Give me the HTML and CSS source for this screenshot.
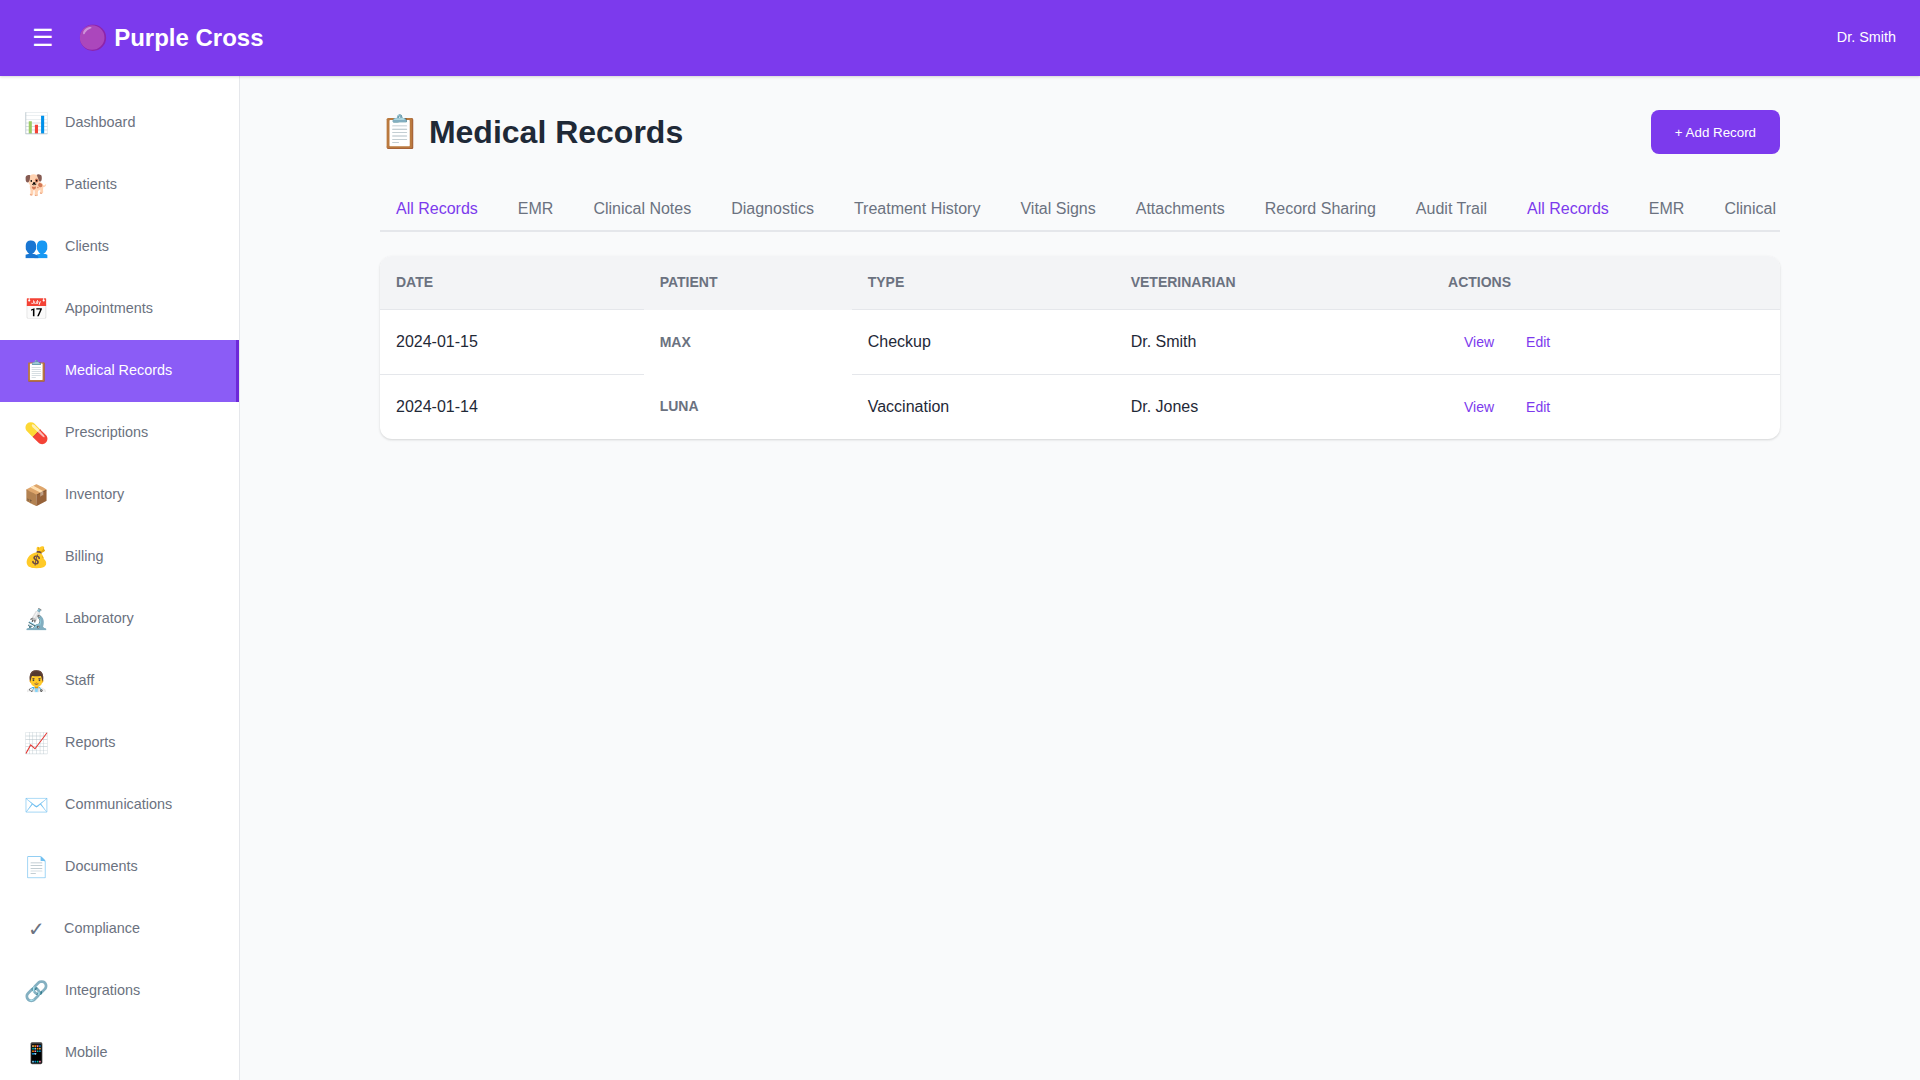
FILE: index.html
```html
<!DOCTYPE html>
<html lang="en">
<head>
<meta charset="UTF-8">
<title>Purple Cross</title>
<link rel="stylesheet" href="styles.css">
</head>
<body>
<header class="navbar">
  <div class="navbar-brand">
    <button class="menu-toggle">☰</button>
    <h1>🟣 Purple Cross</h1>
  </div>
  <span class="user-name">Dr. Smith</span>
</header>
<div class="layout">
  <aside class="sidebar">
    <nav>
      <a class="nav-item"><span class="nav-icon">📊</span><span>Dashboard</span></a>
      <a class="nav-item"><span class="nav-icon">🐕</span><span>Patients</span></a>
      <a class="nav-item"><span class="nav-icon">👥</span><span>Clients</span></a>
      <a class="nav-item"><span class="nav-icon">📅</span><span>Appointments</span></a>
      <a class="nav-item active"><span class="nav-icon">📋</span><span>Medical Records</span></a>
      <a class="nav-item"><span class="nav-icon">💊</span><span>Prescriptions</span></a>
      <a class="nav-item"><span class="nav-icon">📦</span><span>Inventory</span></a>
      <a class="nav-item"><span class="nav-icon">💰</span><span>Billing</span></a>
      <a class="nav-item"><span class="nav-icon">🔬</span><span>Laboratory</span></a>
      <a class="nav-item"><span class="nav-icon">👨‍⚕️</span><span>Staff</span></a>
      <a class="nav-item"><span class="nav-icon">📈</span><span>Reports</span></a>
      <a class="nav-item"><span class="nav-icon">✉️</span><span>Communications</span></a>
      <a class="nav-item"><span class="nav-icon">📄</span><span>Documents</span></a>
      <a class="nav-item"><span class="nav-icon">✓</span><span>Compliance</span></a>
      <a class="nav-item"><span class="nav-icon">🔗</span><span>Integrations</span></a>
      <a class="nav-item"><span class="nav-icon">📱</span><span>Mobile</span></a>
    </nav>
  </aside>
  <main class="content">
    <div class="page">
      <div class="page-header">
        <h1>📋 Medical Records</h1>
        <button class="btn-primary">+ Add Record</button>
      </div>
      <div class="tabs">
        <a class="tab active">All Records</a>
        <a class="tab">EMR</a>
        <a class="tab">Clinical Notes</a>
        <a class="tab">Diagnostics</a>
        <a class="tab">Treatment History</a>
        <a class="tab">Vital Signs</a>
        <a class="tab">Attachments</a>
        <a class="tab">Record Sharing</a>
        <a class="tab">Audit Trail</a>
        <a class="tab active">All Records</a>
        <a class="tab">EMR</a>
        <a class="tab">Clinical Notes</a>
      </div>
      <div class="table-container">
        <table class="data-table">
          <thead>
            <tr><th>Date</th><th>Patient</th><th>Type</th><th>Veterinarian</th><th>Actions</th></tr>
          </thead>
          <tbody>
            <tr><td>2024-01-15</td><th>Max</th><td>Checkup</td><td>Dr. Smith</td><td><button class="btn-link">View</button><button class="btn-link">Edit</button></td></tr>
            <tr><td>2024-01-14</td><th>Luna</th><td>Vaccination</td><td>Dr. Jones</td><td><button class="btn-link">View</button><button class="btn-link">Edit</button></td></tr>
          </tbody>
        </table>
      </div>
    </div>
  </main>
</div>
</body>
</html>
```

FILE: styles.css
```css
* { box-sizing: border-box; margin: 0; padding: 0; }
body {
  height: 100vh;
  overflow: hidden;
  display: flex;
  flex-direction: column;
  font-family: "Liberation Sans", Arial, sans-serif;
  line-height: 1.5;
  color: #1f2937;
  background: #f9fafb;
}
button { font-family: inherit; border: none; cursor: pointer; }
.navbar {
  position: relative;
  z-index: 1;
  flex: none;
  height: 76px;
  padding: 0 24px;
  display: flex;
  align-items: center;
  justify-content: space-between;
  background: #7c3aed;
  color: #fff;
  box-shadow: 0 1px 3px rgba(0, 0, 0, 0.1), 0 1px 2px rgba(0, 0, 0, 0.06);
}
.navbar-brand { display: flex; align-items: center; gap: 16px; }
.navbar-brand h1 { font-size: 24px; }
.menu-toggle { width: 37.5px; background: none; color: #fff; font-size: 24px; padding: 8px; }
.user-name { font-size: 14.4px; }
.layout { flex: 1; min-height: 0; display: flex; }
.sidebar {
  flex: none;
  width: 240px;
  padding: 16px 0;
  overflow: hidden;
  background: #fff;
  border-right: 1px solid #e5e7eb;
}
.nav-item {
  display: flex;
  align-items: center;
  gap: 16px;
  height: 62px;
  padding: 0 24px;
  color: #6b7280;
  font-size: 14.4px;
}
.nav-item.active { background: #8b5cf6; color: #fff; border-right: 3px solid #6d28d9; }
.nav-icon { min-width: 24px; text-align: center; font-size: 20px; }
.content { flex: 1; min-width: 0; padding: 32px; }
.page { width: 1400px; margin: 0 auto; }
.page-header { display: flex; align-items: center; justify-content: space-between; margin-bottom: 32px; }
.page-header h1 { font-size: 32px; }
.btn-primary {
  padding: 12px 24px;
  height: 44px;
  border-radius: 8px;
  background: #7c3aed;
  color: #fff;
  font-size: 13.333px;
}
.tabs { display: flex; gap: 8px; overflow: hidden; margin-bottom: 24px; border-bottom: 2px solid #e5e7eb; }
.tab { flex: none; padding: 9px 16px; color: #6b7280; white-space: nowrap; }
.tab.active { color: #7c3aed; }
.table-container {
  overflow: hidden;
  border-radius: 12px;
  background: #fff;
  box-shadow: 0 1px 3px rgba(0, 0, 0, 0.1), 0 1px 2px rgba(0, 0, 0, 0.06);
}
.data-table { width: 100%; border-collapse: collapse; }
.data-table thead { background: #f3f4f6; }
th { padding: 16px; text-align: left; font-size: 14px; text-transform: uppercase; color: #6b7280; }
td { padding: 16px; border-top: 1px solid #e5e7eb; }
.btn-link { padding: 8px 16px; background: none; color: #7c3aed; font-size: 14px; }
```
